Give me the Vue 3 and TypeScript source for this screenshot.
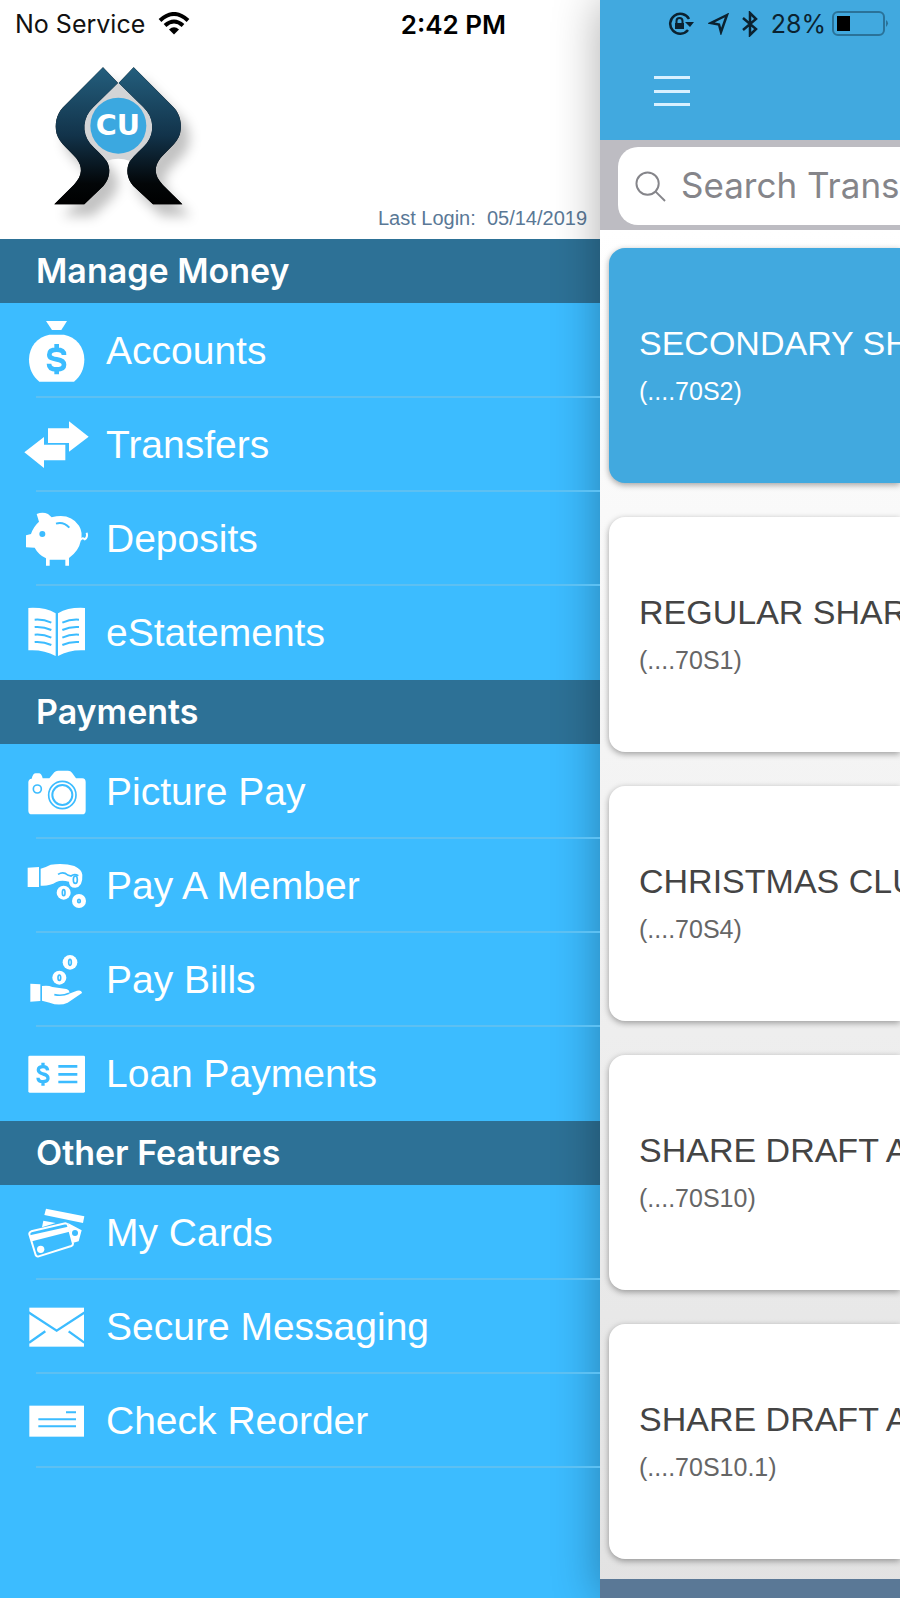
<script setup lang="ts">
interface NavItem {
  label: string
  icon: string
  viewBox: string
}
interface NavSection {
  title: string
  items: NavItem[]
}
interface Account {
  name: string
  suffix: string
  active?: boolean
}

const sections: NavSection[] = [
  {
    title: 'Manage Money',
    items: [
      { label: 'Accounts', icon: 'bag', viewBox: '66 189 210 282' },
      { label: 'Transfers', icon: 'arrows', viewBox: '66 471 210 282' },
      { label: 'Deposits', icon: 'pig', viewBox: '66 33 210 282' },
      { label: 'eStatements', icon: 'book', viewBox: '66 315 210 282' },
    ],
  },
  {
    title: 'Payments',
    items: [
      { label: 'Picture Pay', icon: 'camera', viewBox: '66 12 210 282' },
      { label: 'Pay A Member', icon: 'give', viewBox: '66 294 210 282' },
      { label: 'Pay Bills', icon: 'receive', viewBox: '66 6 210 282' },
      { label: 'Loan Payments', icon: 'bill', viewBox: '66 288 210 282' },
    ],
  },
  {
    title: 'Other Features',
    items: [
      { label: 'My Cards', icon: 'cards', viewBox: '66 15 210 282' },
      { label: 'Secure Messaging', icon: 'mail', viewBox: '66 297 210 282' },
      { label: 'Check Reorder', icon: 'check', viewBox: '66 579 210 282' },
    ],
  },
]

const accounts: Account[] = [
  { name: 'SECONDARY SHARE', suffix: '(....70S2)', active: true },
  { name: 'REGULAR SHARE', suffix: '(....70S1)' },
  { name: 'CHRISTMAS CLUB', suffix: '(....70S4)' },
  { name: 'SHARE DRAFT ACCOUNT', suffix: '(....70S10)' },
  { name: 'SHARE DRAFT ACCOUNT', suffix: '(....70S10.1)' },
]
</script>

<template>
  <div class="app">
    <aside class="drawer">
      <header class="drawer-head">
        <div class="status status-left">
          <span class="carrier">
            No Service
            <svg class="wifi" viewBox="0 0 32 24" aria-hidden="true">
              <path d="M2 8.500Q16-4.500 30 8.500" />
              <path d="M7 13.500Q16 5.500 25 13.500" />
              <path class="solid" d="M11 17.500Q16 13 21 17.500L16 22.500Z" />
            </svg>
          </span>
          <span class="time">2:42 PM</span>
        </div>
        <div class="brand">
          <svg class="logo" viewBox="150 192 480 510" role="img" aria-label="CU">
            <defs>
              <linearGradient id="tone" x1="0" y1="200" x2="0" y2="613" gradientUnits="userSpaceOnUse">
                <stop offset="0" stop-color="#245f7e" />
                <stop offset="0.5" stop-color="#12334a" />
                <stop offset="0.85" stop-color="#030608" />
                <stop offset="1" stop-color="#000" />
              </linearGradient>
              <g id="hands">
                <path d="M309 202L354 249L280 322C248 352 245 398 270 430C284 448 306 463 320 483C333 506 330 535 310 558L253 613H163L222 554C249 526 248 500 229 475C213 454 178 430 170 401C163 372 170 342 188 323Z" />
                <path d="M401 202L356 249L430 322C462 352 465 398 440 430C426 448 404 463 390 483C377 506 380 535 400 558L459 613H547L488 554C461 526 462 500 481 475C497 454 532 430 540 401C547 372 540 342 522 323Z" />
              </g>
            </defs>
            <use class="shade" href="#hands" />
            <path class="halo" d="M355 249L430 322C462 352 465 398 440 430C426 448 404 463 390 483Q355 470 320 483C306 463 284 448 270 430C245 398 248 352 280 322Z" />
            <use class="solid-hands" href="#hands" />
            <circle class="badge" cx="355" cy="377" r="84" />
            <text class="badge-text" x="354" y="404">CU</text>
          </svg>
          <p class="last-login">Last Login:&nbsp; 05/14/2019</p>
        </div>
      </header>

      <nav>
        <section v-for="section in sections" :key="section.title" class="group">
          <h2>{{ section.title }}</h2>
          <ul>
            <li v-for="item in section.items" :key="item.label">
              <a href="#">
                <svg class="icon" :viewBox="item.viewBox" aria-hidden="true">
                  <g v-if="item.icon === 'bag'">
                    <path d="M138 240H201L184 267H156Z" />
                    <path d="M148 281H192C228 287 253 318 253 355C253 384 242 406 222 422H118C98 406 87 384 87 355C87 318 112 287 148 281Z" />
                    <path class="cut w14" d="M192 342C192 331 184 326 170 326C155 326 148 332 148 341C148 351 157 353 170 355C184 357 192 361 192 371C192 381 184 385 170 385C155 385 147 380 147 368M170 309V326M170 385V400" />
                  </g>
                  <g v-else-if="item.icon === 'arrows'">
                    <path d="M144 562H207V541L266 587L207 632V606H144Z" />
                    <path d="M73 634L132 588V611H196V658H132V681Z" />
                  </g>
                  <g v-else-if="item.icon === 'pig'">
                    <path d="M110 99Q128 92 144 99L155 109Q210 95 237 134Q250 155 242 181Q236 211 207 231V254H196V236H149V254H138V232Q115 221 104 200L78 199V163L93 159Q100 137 117 122Z" />
                    <path class="line w6" d="M240 178Q246 168 254 175Q264 169 260 155" />
                    <circle class="hole" cx="127" cy="159" r="9" />
                    <path class="cut w6" d="M168 128Q190 121 208 140" />
                  </g>
                  <g v-else-if="item.icon === 'book'">
                    <path d="M85 381Q135 378 167 397V525Q130 505 85 508Z" />
                    <path d="M255 381Q206 378 174 397V525Q210 505 255 508Z" />
                    <path class="cut w6" d="M104 416Q130 414 154 425M104 438Q130 436 154 447M104 461Q130 459 154 470M104 483Q130 481 154 492M237 416Q211 414 187 425M237 438Q211 436 187 447M237 461Q211 459 187 470M237 483Q211 481 187 492" />
                  </g>
                  <g v-else-if="item.icon === 'camera'">
                    <path d="M95 113Q99 97 107 97H118Q125 98 128 112H148L163 94Q167 89 174 89H204Q212 89 216 95L228 112H247Q257 113 257 123V209Q257 220 246 220H96Q85 220 85 209V123Q86 114 95 113Z" />
                    <circle class="cut w5" cx="187" cy="162" r="41" />
                    <circle class="cut w6" cx="187" cy="162" r="30" />
                    <circle class="cut w5" cx="112" cy="144" r="12" />
                  </g>
                  <g v-else-if="item.icon === 'give'">
                    <path d="M83 380L117 378V438H83Z" />
                    <path d="M122 383Q139 378 152 371Q194 366 223 375Q246 386 247 401Q249 437 226 440Q207 440 207 422Q184 416 169 423Q148 436 122 434Z" />
                    <path class="cut w5" d="M174 400Q190 390 203 402L213 405Q223 397 235 404" />
                    <ellipse class="cut w5" cx="226" cy="416" rx="6" ry="11" />
                    <circle cx="191" cy="455" r="21" />
                    <ellipse class="cut w5" cx="191" cy="455" rx="4" ry="9" />
                    <circle cx="237" cy="480" r="21" />
                    <ellipse class="cut w5" cx="237" cy="480" rx="4" ry="5" />
                  </g>
                  <g v-else-if="item.icon === 'receive'">
                    <path d="M91 158L121 160V210L91 212Z" />
                    <path d="M126 165Q145 162 157 168L199 174Q211 178 207 188L231 179Q245 176 246 186L203 215Q178 226 149 215L126 209Z" />
                    <path class="cut w5" d="M163 191Q187 196 207 187" />
                    <circle cx="210" cy="94" r="22" />
                    <ellipse class="cut w5" cx="210" cy="94" rx="4" ry="9" />
                    <circle cx="178" cy="140" r="21" />
                    <ellipse class="cut w5" cx="178" cy="140" rx="4" ry="8" />
                  </g>
                  <g v-else-if="item.icon === 'bill'">
                    <rect x="85" y="374" width="170" height="111" rx="4" />
                    <path class="cut w10" d="M143 418Q142 407 129 407Q115 407 115 417Q115 425 129 429Q144 432 144 442Q144 452 129 452Q114 452 114 440M129 395V407M129 452V464" />
                    <path class="cut w8" d="M175 406H232M175 430H232M175 453H232" />
                  </g>
                  <g v-else-if="item.icon === 'cards'">
                    <path d="M138 83L253 106L249 126L133 102Z" />
                    <path d="M130 119L167 126L126 139ZM204 126L245 148L236 181L220 185Z" />
                    <circle class="hole" cx="225" cy="156" r="9" />
                    <path class="line w6" d="M94 151L196 127Q202 127 204 133L219 188Q219 193 214 195L116 226Q110 228 107 222L88 160Q87 154 94 151Z" />
                    <path d="M90 163L204 137L208 152L96 181Z" />
                    <circle cx="122" cy="205" r="11" />
                  </g>
                  <g v-else-if="item.icon === 'mail'">
                    <rect x="88" y="380" width="164" height="117" />
                    <path class="cut w7" d="M84 393L170 449L256 393M87 485L136 451M253 485L206 451" />
                  </g>
                  <g v-else>
                    <rect x="88" y="674" width="164" height="93" />
                    <path class="cut w6" d="M198 694H228M115 715H228M115 736H228" />
                  </g>
                </svg>
                <span>{{ item.label }}</span>
              </a>
            </li>
          </ul>
        </section>
      </nav>
    </aside>

    <main class="content">
      <header class="topbar">
        <div class="status status-right">
          <svg class="glyph lock" viewBox="0 0 26 24" aria-hidden="true">
            <path class="stroke" d="M21 7A10 10 0 1 0 20 18" />
            <path d="M17 10H26L22 15ZM7 11H16V17H7Z" />
            <path class="thin" d="M8.500 12V9Q8.500 6 11.500 6T14.500 9V12" />
          </svg>
          <svg class="glyph arrow" viewBox="0 0 22 22" aria-hidden="true">
            <path class="stroke" d="M19 2L3 10L11 11.500L13 19Z" />
          </svg>
          <svg class="glyph bt" viewBox="0 0 16 26" aria-hidden="true">
            <path class="stroke" d="M1 7L14 18L8 24V2L14 8L1 19" />
          </svg>
          <span class="percent">28%</span>
          <svg class="battery" viewBox="0 0 57 26" aria-hidden="true">
            <rect class="shell" x="1" y="1" width="51" height="23" rx="5" />
            <rect x="5" y="5" width="13" height="15" />
            <path class="tip" d="M54 9Q58 12 54 16Z" />
          </svg>
        </div>
        <button class="menu" type="button" aria-label="Toggle menu">
          <i></i><i></i><i></i>
        </button>
      </header>

      <div class="search">
        <label class="field">
          <svg viewBox="0 0 32 32" aria-hidden="true">
            <circle cx="13" cy="13" r="11.500" />
            <path d="M21 21L31 31" />
          </svg>
          <input type="text" aria-label="Search Transactions" placeholder="Search Transactions" />
        </label>
      </div>

      <div class="cards">
        <article v-for="(account, i) in accounts" :key="i" class="card" :class="{ active: account.active }">
          <h3>{{ account.name }}</h3>
          <p>{{ account.suffix }}</p>
        </article>
      </div>
      <footer class="footer"></footer>
    </main>
  </div>
</template>

<style>
body {
  margin: 0;
}
</style>

<style scoped>
.app {
  display: grid;
  grid-template-columns: minmax(0, 2fr) minmax(0, 1fr);
  min-height: 100vh;
  overflow: hidden;
  font-family: "Liberation Sans", Arial, sans-serif;
}
h2,
h3,
p,
ul {
  margin: 0;
  padding: 0;
}
.drawer {
  background: #3cbcff;
}
.drawer-head {
  display: flex;
  flex-direction: column;
  height: 239px;
  background: #fff;
}
.status {
  display: flex;
  align-items: center;
  height: 48px;
  flex: none;
  font-family: Inter, "Liberation Sans", sans-serif;
  font-size: 25px;
  color: #111;
  white-space: nowrap;
}
.status-left {
  justify-content: space-between;
  padding: 0 94px 0 15px;
}
.carrier {
  display: flex;
  align-items: center;
  gap: 13px;
}
.wifi {
  width: 32px;
  height: 24px;
  fill: none;
  stroke: #000;
  stroke-width: 4;
}
.wifi .solid {
  fill: #000;
  stroke: none;
}
.time {
  font-size: 26px;
  font-weight: 600;
  color: #000;
}
.brand {
  display: flex;
  flex: 1;
  justify-content: space-between;
  align-items: flex-end;
  padding: 0 13px 5px 50px;
}
.logo {
  width: 160px;
  height: 170px;
  overflow: visible;
}
.shade {
  filter: drop-shadow(26px 36px 18px rgba(0, 0, 0, 0.24));
}
.solid-hands {
  fill: url(#tone);
}
.halo {
  fill: #d3d4d6;
}
.badge {
  fill: #3ba8e0;
}
.badge-text {
  font: 700 86px "DejaVu Sans", sans-serif;
  text-anchor: middle;
  fill: #fff;
}
.last-login {
  padding-bottom: 5px;
  font-size: 20px;
  line-height: 22px;
  color: #5a7896;
}
h2 {
  height: 64px;
  margin-bottom: 1px;
  padding-left: 36px;
  background: #2d7196;
  color: #fff;
  font: 600 34px/64px Inter, "Liberation Sans", sans-serif;
  white-space: nowrap;
}
ul {
  list-style: none;
}
li a {
  position: relative;
  display: flex;
  align-items: center;
  gap: 14px;
  height: 94px;
  padding-left: 22px;
  color: #fff;
  font-size: 39px;
  text-decoration: none;
  white-space: nowrap;
}
li a::after {
  content: "";
  position: absolute;
  right: 0;
  bottom: 0;
  left: 36px;
  height: 2px;
  background: #5dc0f2;
}
.group:not(:last-child) li:last-child a::after {
  display: none;
}
.icon {
  flex: none;
  width: 70px;
  height: 94px;
  fill: #fff;
}
.cut {
  fill: none;
  stroke: #3cbcff;
}
.line {
  fill: none;
  stroke: #fff;
}
.hole {
  fill: #3cbcff;
}
.w5 {
  stroke-width: 5;
}
.w6 {
  stroke-width: 6;
}
.w7 {
  stroke-width: 7;
}
.w8 {
  stroke-width: 8;
}
.w10 {
  stroke-width: 10;
}
.w14 {
  stroke-width: 14;
}
.content {
  display: flex;
  flex-direction: column;
  background: linear-gradient(#fff 230px, #f4f4f4 750px, #e2e2e2);
  box-shadow: 0 0 44px rgba(0, 0, 0, 0.32);
}
.topbar {
  height: 140px;
  background: #41a9df;
}
.status-right {
  justify-content: flex-end;
  padding-right: 11px;
  color: #0b2230;
}
.glyph {
  flex: none;
  fill: #0b2230;
}
.glyph .stroke {
  fill: none;
  stroke: #0b2230;
  stroke-width: 2.500;
}
.glyph .thin {
  fill: none;
  stroke: #0b2230;
  stroke-width: 2;
}
.lock {
  width: 26px;
  height: 24px;
  margin-right: 14px;
}
.arrow {
  width: 22px;
  height: 22px;
  margin-right: 12px;
}
.bt {
  width: 16px;
  height: 26px;
  margin-right: 13px;
}
.percent {
  margin-right: 6px;
}
.battery {
  flex: none;
  width: 57px;
  height: 26px;
  fill: #000;
}
.battery .shell {
  fill: none;
  stroke: #2a7299;
  stroke-width: 2;
}
.battery .tip {
  fill: #2a7299;
}
.menu {
  display: flex;
  flex-direction: column;
  justify-content: space-between;
  width: 36px;
  height: 30px;
  margin: 28px 0 0 54px;
  padding: 0;
  border: 0;
  background: none;
}
.menu i {
  height: 3px;
  background: #d8f0ff;
}
.search {
  padding: 7px 0 5px 18px;
  background: #bdbcc2;
}
.field {
  display: flex;
  align-items: center;
  gap: 15px;
  height: 78px;
  padding-left: 17px;
  border-radius: 20px 0 0 20px;
  background: #fff;
}
.field svg {
  flex: none;
  width: 31px;
  height: 31px;
  fill: none;
  stroke: #85858a;
  stroke-width: 2;
}
.field input {
  flex: 1;
  min-width: 0;
  padding: 0 0 2px;
  border: 0;
  outline: 0;
  background: none;
  font: 35px Inter, "Liberation Sans", sans-serif;
}
.field input::placeholder {
  color: #85858a;
  opacity: 1;
}
.cards {
  display: grid;
  gap: 34px;
  padding: 18px 0 20px 9px;
  overflow: hidden;
}
.card {
  height: 235px;
  box-sizing: border-box;
  padding: 74px 0 0 30px;
  border-radius: 16px 0 0 16px;
  background: #fff;
  box-shadow: 0 2px 6px rgba(0, 0, 0, 0.36);
  color: #444;
  white-space: nowrap;
  overflow: hidden;
}
.card h3 {
  font-size: 34px;
  font-weight: 400;
  line-height: 42px;
}
.card p {
  margin-top: 12px;
  font-size: 25px;
  line-height: 30px;
  color: #666;
}
.card.active {
  background: #41a9df;
}
.card.active h3,
.card.active p {
  color: #fff;
}
.footer {
  flex: 1;
  min-height: 19px;
  background: #5a7896;
}
</style>
